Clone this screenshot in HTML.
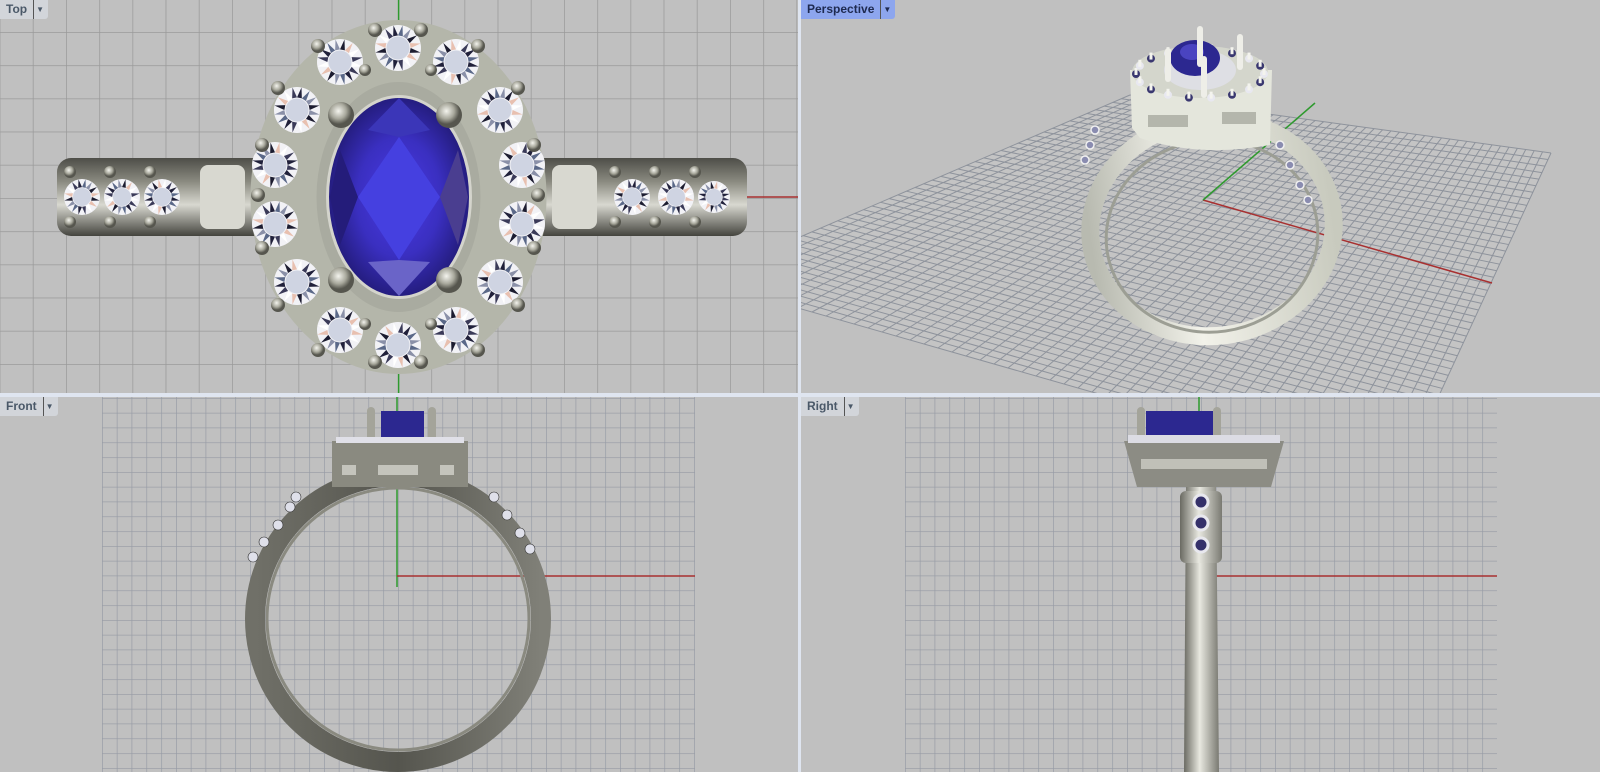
<!DOCTYPE html>
<html><head><meta charset="utf-8"><style>
html,body{margin:0;padding:0;background:#dfe5f0;width:1600px;height:772px;overflow:hidden;font-family:"Liberation Sans",sans-serif}
.pane{position:absolute;background:#c0c0c0;overflow:hidden}
.tab{position:absolute;left:0;top:0;height:19px;background:#d2d5da;color:#4a5868;font-weight:bold;font-size:12px;line-height:19px;padding:0 4px 0 6px;border-bottom-right-radius:3px}
.tab span{display:inline-block;margin-left:6px;border-left:1px solid #555;padding-left:2px;font-size:8px;vertical-align:top}
.tab.act{background:#8da6ee;color:#1e2a50}
</style></head><body>
<div class="pane" style="left:0;top:0;width:798px;height:393px">
<svg width="798" height="393" id="topv">
<defs>
<pattern id="g33" x="-0.4" y="-1.2" width="33.2" height="33.2" patternUnits="userSpaceOnUse"><path d="M0 0V33.2M0 0H33.2" stroke="#9a9a9a" stroke-width="1.5" fill="none"/></pattern>
<radialGradient id="sap" cx="50%" cy="50%" r="60%"><stop offset="0" stop-color="#4a3ae6"/><stop offset=".5" stop-color="#3a2fc0"/><stop offset="1" stop-color="#1a1460"/></radialGradient>
<linearGradient id="band" x1="0" y1="0" x2="0" y2="1"><stop offset="0" stop-color="#4e4e48"/><stop offset=".3" stop-color="#8a8a80"/><stop offset=".6" stop-color="#d8d8d0"/><stop offset="1" stop-color="#44443e"/></linearGradient>
<radialGradient id="dia"><stop offset="0" stop-color="#dfe2ec"/><stop offset=".55" stop-color="#d0d4e0"/><stop offset=".8" stop-color="#f4f4f8"/><stop offset="1" stop-color="#9aa0b4"/></radialGradient>
<radialGradient id="ball" cx="40%" cy="35%"><stop offset="0" stop-color="#f4f4ee"/><stop offset=".6" stop-color="#a8a89c"/><stop offset="1" stop-color="#56564e"/></radialGradient>
</defs>
<rect width="798" height="393" fill="url(#g33)"/>
<line x1="398.6" y1="0" x2="398.6" y2="393" stroke="#2e9a2e" stroke-width="1.5"/>
<line x1="546" y1="197" x2="798" y2="197" stroke="#a83030" stroke-width="1.5"/>
<rect x="57" y="158" width="690" height="78" rx="14" fill="url(#band)"/>
<rect x="200" y="165" width="45" height="64" rx="8" fill="#d8d8d0"/><rect x="552" y="165" width="45" height="64" rx="8" fill="#d8d8d0"/>
<ellipse cx="398.5" cy="197" rx="148" ry="177" fill="#b4b6aa"/>
<ellipse cx="398.5" cy="197" rx="82" ry="115" fill="#a9aba0"/>
<g id="stones"></g>
<g fill="url(#ball)">
<circle cx="375" cy="30" r="7"/><circle cx="421" cy="30" r="7"/><circle cx="318" cy="46" r="7"/><circle cx="478" cy="46" r="7"/>
<circle cx="278" cy="88" r="7"/><circle cx="518" cy="88" r="7"/><circle cx="262" cy="145" r="7"/><circle cx="534" cy="145" r="7"/>
<circle cx="258" cy="195" r="7"/><circle cx="538" cy="195" r="7"/><circle cx="262" cy="248" r="7"/><circle cx="534" cy="248" r="7"/>
<circle cx="278" cy="305" r="7"/><circle cx="518" cy="305" r="7"/><circle cx="318" cy="350" r="7"/><circle cx="478" cy="350" r="7"/>
<circle cx="375" cy="362" r="7"/><circle cx="421" cy="362" r="7"/>
<circle cx="365" cy="70" r="6"/><circle cx="431" cy="70" r="6"/><circle cx="365" cy="324" r="6"/><circle cx="431" cy="324" r="6"/>
<circle cx="70" cy="172" r="6"/><circle cx="110" cy="172" r="6"/><circle cx="150" cy="172" r="6"/><circle cx="70" cy="222" r="6"/><circle cx="110" cy="222" r="6"/><circle cx="150" cy="222" r="6"/>
<circle cx="615" cy="172" r="6"/><circle cx="655" cy="172" r="6"/><circle cx="695" cy="172" r="6"/><circle cx="615" cy="222" r="6"/><circle cx="655" cy="222" r="6"/><circle cx="695" cy="222" r="6"/>
</g>
<ellipse cx="399" cy="197" rx="73" ry="102" fill="#d4d4cc"/>
<ellipse cx="399" cy="197" rx="70" ry="99" fill="url(#sap)"/>
<polygon points="399,137 440,197 399,260 358,197" fill="#4540e0"/>
<polygon points="358,197 340,150 330,197 340,245" fill="#241c7a"/>
<polygon points="440,197 458,150 468,197 458,245" fill="#4a3e90"/>
<polygon points="399,98 430,130 399,137 368,130" fill="#3b36b8"/>
<polygon points="399,296 430,262 399,260 368,262" fill="#6a64c8"/>
<g fill="url(#ball)"><circle cx="341" cy="115" r="13"/><circle cx="449" cy="115" r="13"/><circle cx="341" cy="280" r="13"/><circle cx="449" cy="280" r="13"/></g>
</svg>
<div class="tab">Top<span>▼</span></div></div>

<div class="pane" style="left:801px;top:0;width:799px;height:393px">
<svg width="799" height="393" id="persp"></svg>
<div class="tab act">Perspective<span>▼</span></div></div>

<div class="pane" style="left:0;top:397px;width:798px;height:375px">
<svg width="798" height="375">
<defs><pattern id="g15" x="102" y="1" width="14.8" height="14.8" patternUnits="userSpaceOnUse"><path d="M0 0V14.8M0 0H14.8" stroke="#959aa4" stroke-width="1.3" fill="none"/></pattern>
<linearGradient id="fr" x1="0" x2="1"><stop offset="0" stop-color="#707068"/><stop offset=".5" stop-color="#55554e"/><stop offset="1" stop-color="#808078"/></linearGradient></defs>
<rect x="102" y="0" width="593" height="375" fill="url(#g15)"/>
<line x1="397" y1="0" x2="397" y2="190" stroke="#2e9a2e" stroke-width="1.5"/>
<line x1="397" y1="179" x2="695" y2="179" stroke="#a83030" stroke-width="1.5"/>
<circle cx="398" cy="222" r="143" fill="none" stroke="url(#fr)" stroke-width="20"/>
<circle cx="398" cy="222" r="131" fill="none" stroke="#8a8a80" stroke-width="3"/>
<rect x="332" y="44" width="136" height="46" fill="#8a8a80"/>
<rect x="342" y="68" width="14" height="10" fill="#c4c4bc"/><rect x="378" y="68" width="40" height="10" fill="#c4c4bc"/><rect x="440" y="68" width="14" height="10" fill="#c4c4bc"/>
<rect x="381" y="14" width="43" height="30" fill="#2c2890"/>
<rect x="367" y="10" width="8" height="34" rx="4" fill="#a4a49a"/><rect x="428" y="10" width="8" height="34" rx="4" fill="#a4a49a"/>
<g fill="#e0e0e8"><rect x="336" y="40" width="128" height="6"/></g>
<g fill="#dfe0ea" stroke="#333" stroke-width=".6"><circle cx="296" cy="100" r="5"/><circle cx="290" cy="110" r="5"/><circle cx="278" cy="128" r="5"/><circle cx="264" cy="145" r="5"/><circle cx="253" cy="160" r="5"/><circle cx="494" cy="100" r="5"/><circle cx="507" cy="118" r="5"/><circle cx="520" cy="136" r="5"/><circle cx="530" cy="152" r="5"/></g>
</svg>
<div class="tab">Front<span>▼</span></div></div>

<div class="pane" style="left:801px;top:397px;width:799px;height:375px">
<svg width="799" height="375">
<defs><pattern id="g15b" x="104" y="1" width="14.8" height="14.8" patternUnits="userSpaceOnUse"><path d="M0 0V14.8M0 0H14.8" stroke="#959aa4" stroke-width="1.3" fill="none"/></pattern>
<linearGradient id="sh" x1="0" x2="1"><stop offset="0" stop-color="#6a6a62"/><stop offset=".45" stop-color="#e8e8e0"/><stop offset="1" stop-color="#7a7a72"/></linearGradient></defs>
<rect x="104" y="0" width="592" height="375" fill="url(#g15b)"/>
<line x1="398" y1="0" x2="398" y2="100" stroke="#2e9a2e" stroke-width="1.5"/>
<line x1="398" y1="179" x2="696" y2="179" stroke="#a83030" stroke-width="1.5"/>
<polygon points="385,90 415,90 418,375 383,375" fill="url(#sh)"/>
<polygon points="323,44 483,44 470,90 336,90" fill="#8c8c84"/>
<rect x="340" y="62" width="126" height="10" fill="#c0c0b8"/>
<rect x="345" y="14" width="70" height="30" fill="#2c2890"/>
<rect x="336" y="10" width="8" height="34" rx="4" fill="#a4a49a"/><rect x="412" y="10" width="8" height="34" rx="4" fill="#a4a49a"/>
<rect x="327" y="38" width="152" height="8" fill="#dcdce4"/>
<g fill="url(#sh)"><rect x="379" y="94" width="42" height="72" rx="6"/></g>
<g fill="#34306a" stroke="#e8e8ee" stroke-width="3"><circle cx="400" cy="105" r="7"/><circle cx="400" cy="126" r="7"/><circle cx="400" cy="148" r="7"/></g>
</svg>
<div class="tab">Right<span>▼</span></div></div>

<script>
(function(){
var ns='';var st=document.getElementById('stones');
var pts=[[398,48,23],[340,62,23],[456,62,23],[297,110,23],[500,110,23],[275,165,23],[522,165,23],[275,224,23],[522,224,23],[297,282,23],[500,282,23],[340,330,23],[456,330,23],[398,345,23],[82,197,18],[122,197,18],[162,197,18],[632,197,18],[676,197,18],[714,197,16]];
var cols=['#1c1c30','#3a3a58','#8a90a8','#ffffff','#5a6888','#e8c0b0','#20203a'];
var h='';
pts.forEach(function(p,k){var x=p[0],y=p[1],r=p[2];
h+='<circle cx="'+x+'" cy="'+y+'" r="'+r+'" fill="#f2f2f6"/>';
for(var i=0;i<16;i++){var a1=i*Math.PI/8,a2=(i+1)*Math.PI/8,am=(a1+a2)/2;
var c=cols[(i*5+k*3)%cols.length];
h+='<polygon points="'+(x+r*0.55*Math.cos(a1))+','+(y+r*0.55*Math.sin(a1))+' '+(x+r*Math.cos(am))+','+(y+r*Math.sin(am))+' '+(x+r*0.55*Math.cos(a2))+','+(y+r*0.55*Math.sin(a2))+'" fill="'+c+'"/>';}
h+='<circle cx="'+x+'" cy="'+y+'" r="'+(r*0.5)+'" fill="#cfd4e2"/>';});
st.innerHTML=h;
})();
(function(){
var s=document.getElementById('persp'),ox=801;
function P(x,y){return [x-ox,y];}
var A=P(1130,95),B=P(1551,153),C=P(1400,480),D=P(700,280);
function lerp(p,q,t){return [p[0]+(q[0]-p[0])*t,p[1]+(q[1]-p[1])*t];}
var h='<polygon points="'+[A,B,C,D].map(function(p){return p.join(',')}).join(' ')+'" fill="#c4c4c4"/>';
var N=50;
for(var i=0;i<=N;i++){var t=i/N;var a=lerp(A,B,t),b=lerp(D,C,t),c=lerp(A,D,t),d=lerp(B,C,t);
h+='<line x1="'+a[0]+'" y1="'+a[1]+'" x2="'+b[0]+'" y2="'+b[1]+'" stroke="#8e939c" stroke-width="1"/>';
h+='<line x1="'+c[0]+'" y1="'+c[1]+'" x2="'+d[0]+'" y2="'+d[1]+'" stroke="#8e939c" stroke-width="1"/>';}
var o=P(1203,200),r=P(1492,283),g=P(1315,103);
h+='<line x1="'+o[0]+'" y1="'+o[1]+'" x2="'+r[0]+'" y2="'+r[1]+'" stroke="#a83030" stroke-width="1.5"/>';
h+='<line x1="'+o[0]+'" y1="'+o[1]+'" x2="'+g[0]+'" y2="'+g[1]+'" stroke="#2e9a2e" stroke-width="1.5"/>';
h+='<defs><linearGradient id="rg" x1="0" x2="1"><stop offset="0" stop-color="#b8bab0"/><stop offset=".4" stop-color="#f2f2ea"/><stop offset="1" stop-color="#c8cabe"/></linearGradient></defs>';
var cx=1212-ox;
h+='<ellipse cx="'+cx+'" cy="228" rx="122" ry="108" transform="rotate(-8 '+cx+' 228)" fill="none" stroke="url(#rg)" stroke-width="18"/>';
h+='<ellipse cx="'+cx+'" cy="236" rx="106" ry="96" transform="rotate(-8 '+cx+' 236)" fill="none" stroke="#9c9e94" stroke-width="3"/>';
/* head */
h+='<path d="M'+(1130-ox)+',70 L'+(1272-ox)+',70 L'+(1270-ox)+',145 Q'+(1200-ox)+',158 '+(1140-ox)+',138 L'+(1132-ox)+',128 Z" fill="#e4e6dc"/>';
h+='<rect x="'+(1148-ox)+'" y="115" width="40" height="12" fill="#b4b6ac"/><rect x="'+(1222-ox)+'" y="112" width="34" height="12" fill="#b4b6ac"/>';
h+='<ellipse cx="'+(1200-ox)+'" cy="72" rx="68" ry="26" fill="#d4d6cc"/>';
for(var k=0;k<18;k++){var an=k*Math.PI*2/18;var x=1200-ox+64*Math.cos(an),y=74+24*Math.sin(an);
h+='<circle cx="'+x+'" cy="'+y+'" r="4" fill="'+(k%2?'#3a3870':'#e8e8f0')+'"/><rect x="'+(x-1.5)+'" y="'+(y-6)+'" width="3" height="7" fill="#f4f4ee"/>';}
h+='<ellipse cx="'+(1200-ox)+'" cy="70" rx="36" ry="20" fill="#dedfe4"/>';
h+='<ellipse cx="'+(1195-ox)+'" cy="58" rx="25" ry="18" fill="#2c2890"/>';
h+='<ellipse cx="'+(1192-ox)+'" cy="52" rx="12" ry="8" fill="#4a44c0"/>';
[[1200,26,45],[1240,34,48],[1168,48,60],[1204,56,76]].forEach(function(p){h+='<rect x="'+(p[0]-ox-3)+'" y="'+p[1]+'" width="6" height="'+(p[2]-p[1]+22)+'" rx="3" fill="#eeeee8"/>';});
/* side stones on shanks */
[[1095,130],[1090,145],[1085,160],[1280,145],[1290,165],[1300,185],[1308,200]].forEach(function(p){h+='<circle cx="'+(p[0]-ox)+'" cy="'+p[1]+'" r="4" fill="#8a8cb0" stroke="#f0f0f0" stroke-width="1.5"/>';});
s.innerHTML=h;})();
</script>
</body></html>
